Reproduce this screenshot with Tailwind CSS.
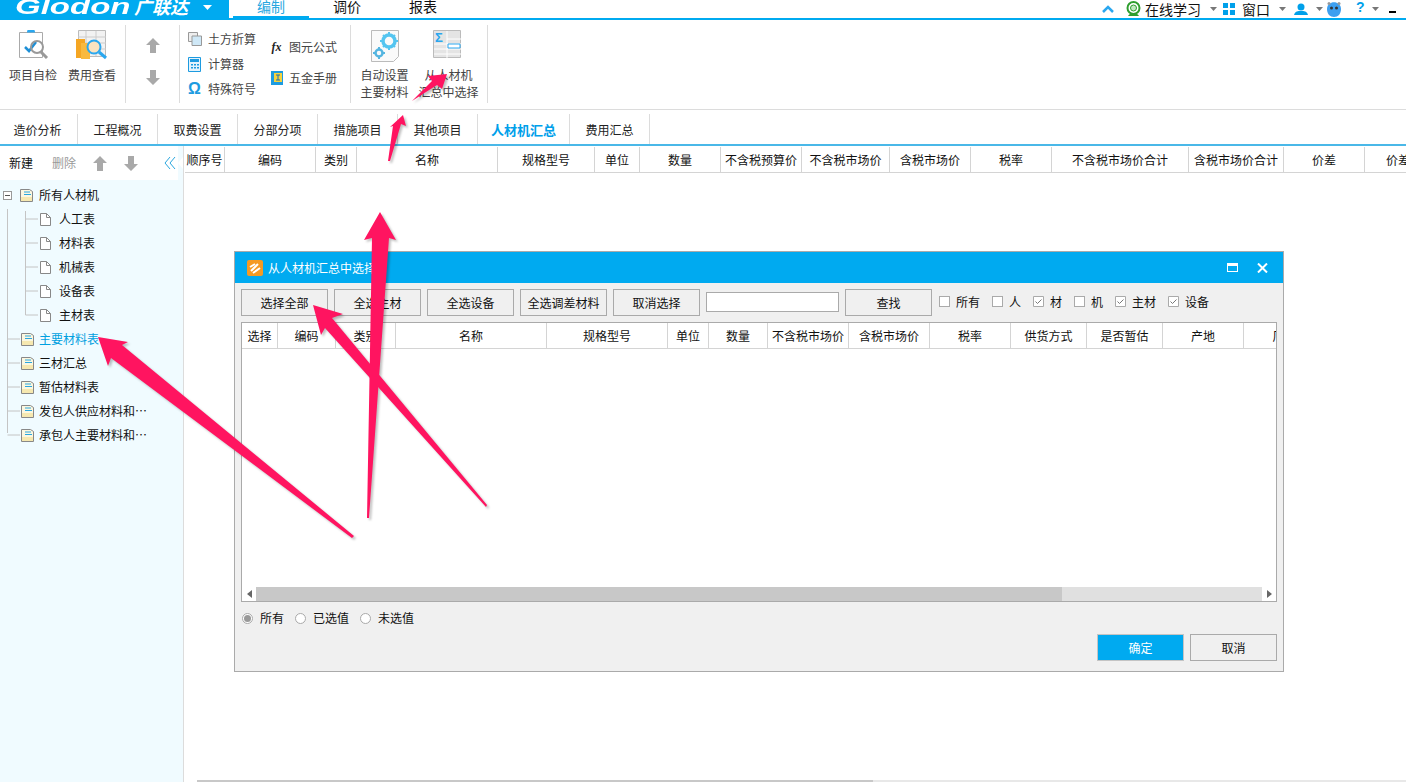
<!DOCTYPE html>
<html lang="zh-CN">
<head>
<meta charset="UTF-8">
<title>广联达 - 人材机汇总</title>
<script src="https://cdn.jsdelivr.net/npm/@tailwindcss/browser@4"></script>
</head>
<body class="bg-white">
<div class="relative w-[1406px] h-[783px] overflow-hidden bg-white text-[12px] leading-none text-[#222] font-['Noto_Sans_CJK_SC','Liberation_Sans',sans-serif]">

  <!-- Title bar -->
  <header class="flex h-[20px] border-b-2 border-[#00aaf0] overflow-hidden">
    <div class="relative flex w-[229px] h-[18px] bg-[#00aaf0] text-white overflow-hidden shrink-0 items-start pl-[15px]">
      <span class="block w-[119px] shrink-0 origin-left scale-x-[1.5] font-['Liberation_Sans'] italic font-bold text-[22px] leading-[24px] -mt-[5px]">Glodon</span>
      <span class="italic font-bold text-[18px] leading-[18px] -mt-[3px] shrink-0">广联达</span>
      <svg class="ml-[15px] mt-[5px]" width="9" height="5"><path d="M0 0h9L4.500 5z" fill="#fff"/></svg>
    </div>
    <nav class="flex ml-[4px] text-[14px] leading-[12px]">
      <div class="w-[76px] h-[18px] text-center text-[#2aa7df] border-b-2 border-[#00aaf0]">编制</div>
      <div class="w-[76px] text-center text-[#111]">调价</div>
      <div class="w-[76px] text-center text-[#111]">报表</div>
    </nav>
    <div class="ml-auto flex items-center h-[18px] text-[14px] text-[#111] pr-[10px]">
      <svg width="12" height="8" viewBox="0 0 12 8"><path d="M1 7l5-5 5 5" fill="none" stroke="#2aa7ef" stroke-width="2.500"/></svg>
      <svg class="ml-[11px]" width="17" height="17" viewBox="0 0 17 17"><circle cx="8.500" cy="7" r="6" fill="none" stroke="#2f9e2f" stroke-width="2"/><circle cx="8.500" cy="7" r="3" fill="#bfe8bf" stroke="#2f9e2f"/><path d="M3 15c2-4 9-4 11 0z" fill="#2f9e2f"/></svg>
      <span class="ml-[3px]">在线学习</span>
      <svg class="ml-[9px]" width="7" height="4"><path d="M0 0h7L3.500 4z" fill="#777"/></svg>
      <svg class="ml-[6px]" width="12" height="12"><path d="M0 0h5v5H0zM7 0h5v5H7zM0 7h5v5H0zM7 7h5v5H7z" fill="#00a0ea"/></svg>
      <span class="ml-[7px]">窗口</span>
      <svg class="ml-[9px]" width="7" height="4"><path d="M0 0h7L3.500 4z" fill="#777"/></svg>
      <svg class="ml-[8px]" width="14" height="13" viewBox="0 0 14 13"><circle cx="7" cy="4" r="3.500" fill="#00a0ea"/><path d="M0 12c1-4 4-4 7-4s6 0 7 4z" fill="#00a0ea"/></svg>
      <svg class="ml-[8px]" width="7" height="4"><path d="M0 0h7L3.500 4z" fill="#777"/></svg>
      <svg class="ml-[3px]" width="16" height="15" viewBox="0 0 16 15"><path d="M1 7c0-9 14-9 14 0 0 5-3 8-7 8S1 12 1 7z" fill="#3d9ff0"/><circle cx="5.500" cy="6" r="1.500" fill="#333"/><circle cx="10.500" cy="6" r="1.500" fill="#333"/><circle cx="3" cy="1.500" r="1.500" fill="#999"/><circle cx="13" cy="1.500" r="1.500" fill="#999"/></svg>
      <span class="ml-[14px] w-[8px] text-[#00a0ea] font-['Liberation_Sans'] font-bold text-[14px] -translate-y-[2px]">?</span>
      <svg class="ml-[8px]" width="7" height="4"><path d="M0 0h7L3.500 4z" fill="#777"/></svg>
      <div class="ml-[10px] w-[7px] h-[2px] bg-black mt-[6px]"></div>
    </div>
  </header>

  <!-- Ribbon -->
  <section class="flex h-[90px] border-b border-[#dcdcdc] text-[#444]">
    <div class="flex w-[126px] mt-[5px] h-[78px] border-r border-[#dcdcdc]">
      <div class="w-[65px] pl-[1px] flex flex-col items-center">
        <svg class="mt-[5px]" width="32" height="30" viewBox="0 0 32 30">
          <path d="M2.500 2.500h23v25h-23z" fill="#fff" stroke="#aaa"/>
          <path d="M10 2.500a4 4 0 0 1 8 0z" fill="#2aa7ef"/>
          <path d="M8 17l4 4 7-9" fill="none" stroke="#1e8fd6" stroke-width="2.500"/>
          <circle cx="20" cy="17" r="6" fill="none" stroke="#999" stroke-width="2"/>
          <path d="M24 22l6 6" stroke="#999" stroke-width="3"/>
        </svg>
        <span class="mt-[9px]">项目自检</span>
      </div>
      <div class="w-[54px] flex flex-col items-center">
        <svg class="mt-[5px]" width="32" height="30" viewBox="0 0 32 30">
          <path d="M2.500 .500h27v26h-27z" fill="#f2f2f2" stroke="#bbb"/>
          <path d="M2 7h28M2 13h28M2 19h28M10 1v25M20 1v25" stroke="#ccc"/>
          <path d="M0 9h9v19H0z" fill="#f5a623"/>
          <path d="M5 13h9v16H5z" fill="#f9b93e"/>
          <circle cx="18" cy="17" r="6.500" fill="#fbe3c0" stroke="#2aa7ef" stroke-width="2"/>
          <path d="M23 22l7 6" stroke="#2aa7ef" stroke-width="3"/>
        </svg>
        <span class="mt-[9px]">费用查看</span>
      </div>
    </div>
    <div class="flex flex-col items-center w-[54px] mt-[5px] h-[78px] border-r border-[#dcdcdc] pt-[13px] gap-[17px]">
      <svg width="14" height="15" viewBox="0 0 14 15"><path d="M7 0l7 7H10v8H4V7H0z" fill="#a9a9a9"/></svg>
      <svg width="14" height="15" viewBox="0 0 14 15"><path d="M7 15L0 8h4V0h6v8h4z" fill="#a9a9a9"/></svg>
    </div>
    <div class="flex w-[171px] mt-[5px] h-[78px] border-r border-[#dcdcdc]">
      <div class="w-[91px] pl-[8px] flex flex-col pt-[7px] gap-[11px]">
        <div class="flex items-center h-[14px]">
          <svg width="14" height="14" viewBox="0 0 14 14"><path d="M.500.500h9v9h-9z" fill="#eee" stroke="#999"/><path d="M4 4h9.500v9.500H4z" fill="#cfe8f7" stroke="#999"/></svg>
          <span class="ml-[6px]">土方折算</span>
        </div>
        <div class="flex items-center h-[14px]">
          <svg width="13" height="15" viewBox="0 0 13 15"><path d="M.500.500h12v14H.500z" fill="#e4f3fc" stroke="#1d9be0"/><path d="M2 2h9v3H2z" fill="#1d9be0"/><path d="M3 7h2v1.500H3zM6 7h2v1.500H6zM9 7h2v1.500H9zM3 10h2v1.500H3zM6 10h2v1.500H6zM9 10h2v1.500H9z" fill="#1d9be0"/></svg>
          <span class="ml-[7px]">计算器</span>
        </div>
        <div class="flex items-center h-[14px]">
          <span class="w-[14px] text-[#1d9be0] font-['Liberation_Sans'] font-bold text-[16px]">Ω</span>
          <span class="ml-[6px]">特殊符号</span>
        </div>
      </div>
      <div class="flex flex-col pt-[15px] gap-[17px]">
        <div class="flex items-center h-[14px]">
          <span class="w-[11px] text-center font-['Liberation_Serif'] italic font-bold text-[12px] text-[#222]">fx</span>
          <span class="ml-[7px]">图元公式</span>
        </div>
        <div class="flex items-center h-[14px]">
          <svg width="12" height="14" viewBox="0 0 12 14"><path d="M0 0h12v14H0z" fill="#1d9be0"/><path d="M3 2h8v9H3z" fill="#f5d33e"/><path d="M5 4h4M7 4v5M5 9h4" stroke="#1d6fb0"/></svg>
          <span class="ml-[6px]">五金手册</span>
        </div>
      </div>
    </div>
    <div class="flex w-[137px] mt-[5px] h-[78px] border-r border-[#dcdcdc] pl-[1px]">
      <div class="w-[65px] flex flex-col items-center">
        <svg class="mt-[5px]" width="28" height="32" viewBox="0 0 28 32">
          <path d="M.500.500h27v26l-5 5H.500z" fill="#fafafa" stroke="#bbb"/>
          <circle cx="18" cy="11" r="6" fill="none" stroke="#55c5f0" stroke-width="3.500"/>
          <path d="M18 2v3M18 17v3M9 11h3M24 11h3M12 5l2 2M22 15l2 2M24 5l-2 2M14 15l-2 2" stroke="#55c5f0" stroke-width="2"/>
          <circle cx="8" cy="23" r="3.500" fill="none" stroke="#55b5e0" stroke-width="2.500"/>
          <path d="M8 17v2M8 27v2M2 23h2M12 23h2" stroke="#55b5e0" stroke-width="2"/>
        </svg>
        <span class="mt-[4px] text-center leading-[17px]">自动设置<br>主要材料</span>
      </div>
      <div class="w-[63px] flex flex-col items-center">
        <svg class="mt-[5px] -translate-x-[2px]" width="28" height="30" viewBox="0 0 28 30">
          <path d="M.500.500h27v27H.500z" fill="#e4e4e4" stroke="#bbb"/>
          <path d="M14 9h14M1 14h27M1 19h27M1 24h27M14 1v27" stroke="#fff"/>
          <path d="M15 14h12v4H15z" fill="#fff" stroke="#2aa7ef"/>
          <text x="2" y="12" font-size="13" font-weight="bold" fill="#2aa7ef" font-family="Liberation Sans">Σ</text>
        </svg>
        <span class="mt-[6px] text-center leading-[17px] whitespace-nowrap">从人材机<br>汇总中选择</span>
      </div>
    </div>
  </section>

  <!-- Tabs -->
  <nav class="flex h-[36px] border-b-2 border-[#4ab8e8] text-[#222]">
    <div class="w-[78px] mt-[4px] flex items-center justify-center border-r border-[#dcdcdc] pt-[1px] pr-[2px]">造价分析</div>
    <div class="w-[80px] mt-[4px] flex items-center justify-center border-r border-[#dcdcdc] pt-[1px]">工程概况</div>
    <div class="w-[80px] mt-[4px] flex items-center justify-center border-r border-[#dcdcdc] pt-[1px]">取费设置</div>
    <div class="w-[80px] mt-[4px] flex items-center justify-center border-r border-[#dcdcdc] pt-[1px]">分部分项</div>
    <div class="w-[80px] mt-[4px] flex items-center justify-center border-r border-[#dcdcdc] pt-[1px]">措施项目</div>
    <div class="w-[80px] mt-[4px] flex items-center justify-center border-r border-[#dcdcdc] pt-[1px]">其他项目</div>
    <div class="w-[92px] mt-[4px] flex items-center justify-center border-r border-[#dcdcdc] pt-[1px] text-[#00a0ea] text-[13px] font-bold">人材机汇总</div>
    <div class="w-[80px] mt-[4px] flex items-center justify-center border-r border-[#dcdcdc] pt-[1px]">费用汇总</div>
  </nav>

  <div class="flex h-[636px]">
    <!-- Sidebar -->
    <aside class="relative w-[184px] shrink-0 border-r border-[#dcdcdc] bg-[#f0fbff]">
      <div class="flex items-center h-[34px] w-[178px] bg-white">
        <span class="ml-[9px] text-[#111]">新建</span>
        <span class="ml-[19px] text-[#999]">删除</span>
        <svg class="ml-[17px]" width="14" height="15" viewBox="0 0 14 15"><path d="M7 0l7 7H10v8H4V7H0z" fill="#a9a9a9"/></svg>
        <svg class="ml-[17px]" width="14" height="15" viewBox="0 0 14 15"><path d="M7 15L0 8h4V0h6v8h4z" fill="#a9a9a9"/></svg>
        <svg class="ml-[26px]" width="12" height="14" viewBox="0 0 12 14"><path d="M6 1L1 7l5 6M11 1L6 7l5 6" fill="none" stroke="#2aa7df"/></svg>
      </div>
      <svg class="absolute left-[178px] top-[11px]" width="5" height="12"><path d="M5 0L0 6l5 6z" fill="#fff"/></svg>
      <svg class="absolute left-0 top-[35px]" width="60" height="280" fill="none" stroke="#c4c4c4">
        <path d="M7.500 28V252M25.500 30V134M25.500 38H38M25.500 62H38M25.500 86H38M25.500 110H38M25.500 134H38M7.500 158H20M7.500 182H20M7.500 206H20M7.500 230H20M7.500 254H20"/>
      </svg>
      <ul class="relative pt-[3px] text-[#111]">
        <li class="flex items-center h-[24px]">
          <span class="flex items-center justify-center ml-[3px] w-[9px] h-[9px] border border-[#999] bg-white"><span class="w-[5px] h-px bg-[#555]"></span></span>
          <svg class="ml-[8px]" width="13" height="13" viewBox="0 0 13 13"><path d="M.500.500h9l3 2v10H.500z" fill="#fbf7e0" stroke="#888"/><path d="M1 8h11v4H1z" fill="#f6e8b0"/><path d="M4 3h6M4 5.500h7" stroke="#2aa7df"/></svg>
          <span class="ml-[6px]">所有人材机</span>
        </li>
        <li class="flex items-center h-[24px] pl-[40px]"><svg width="11" height="13" viewBox="0 0 11 13"><path d="M.500.500h6l4 4v8H.500z" fill="#fff" stroke="#888"/><path d="M6.500.500v4h4" fill="none" stroke="#888"/></svg><span class="ml-[8px]">人工表</span></li>
        <li class="flex items-center h-[24px] pl-[40px]"><svg width="11" height="13" viewBox="0 0 11 13"><path d="M.500.500h6l4 4v8H.500z" fill="#fff" stroke="#888"/><path d="M6.500.500v4h4" fill="none" stroke="#888"/></svg><span class="ml-[8px]">材料表</span></li>
        <li class="flex items-center h-[24px] pl-[40px]"><svg width="11" height="13" viewBox="0 0 11 13"><path d="M.500.500h6l4 4v8H.500z" fill="#fff" stroke="#888"/><path d="M6.500.500v4h4" fill="none" stroke="#888"/></svg><span class="ml-[8px]">机械表</span></li>
        <li class="flex items-center h-[24px] pl-[40px]"><svg width="11" height="13" viewBox="0 0 11 13"><path d="M.500.500h6l4 4v8H.500z" fill="#fff" stroke="#888"/><path d="M6.500.500v4h4" fill="none" stroke="#888"/></svg><span class="ml-[8px]">设备表</span></li>
        <li class="flex items-center h-[24px] pl-[40px]"><svg width="11" height="13" viewBox="0 0 11 13"><path d="M.500.500h6l4 4v8H.500z" fill="#fff" stroke="#888"/><path d="M6.500.500v4h4" fill="none" stroke="#888"/></svg><span class="ml-[8px]">主材表</span></li>
        <li class="flex items-center h-[24px] pl-[21px] text-[#00a0e0]"><svg width="13" height="13" viewBox="0 0 13 13"><path d="M.500.500h9l3 2v10H.500z" fill="#fbf7e0" stroke="#888"/><path d="M1 8h11v4H1z" fill="#f6e8b0"/><path d="M4 3h6M4 5.500h7" stroke="#2aa7df"/></svg><span class="ml-[5px]">主要材料表</span></li>
        <li class="flex items-center h-[24px] pl-[21px]"><svg width="13" height="13" viewBox="0 0 13 13"><path d="M.500.500h9l3 2v10H.500z" fill="#fbf7e0" stroke="#888"/><path d="M1 8h11v4H1z" fill="#f6e8b0"/><path d="M4 3h6M4 5.500h7" stroke="#2aa7df"/></svg><span class="ml-[5px]">三材汇总</span></li>
        <li class="flex items-center h-[24px] pl-[21px]"><svg width="13" height="13" viewBox="0 0 13 13"><path d="M.500.500h9l3 2v10H.500z" fill="#fbf7e0" stroke="#888"/><path d="M1 8h11v4H1z" fill="#f6e8b0"/><path d="M4 3h6M4 5.500h7" stroke="#2aa7df"/></svg><span class="ml-[5px]">暂估材料表</span></li>
        <li class="flex items-center h-[24px] pl-[21px]"><svg width="13" height="13" viewBox="0 0 13 13"><path d="M.500.500h9l3 2v10H.500z" fill="#fbf7e0" stroke="#888"/><path d="M1 8h11v4H1z" fill="#f6e8b0"/><path d="M4 3h6M4 5.500h7" stroke="#2aa7df"/></svg><span class="ml-[5px]">发包人供应材料和⋯</span></li>
        <li class="flex items-center h-[24px] pl-[21px]"><svg width="13" height="13" viewBox="0 0 13 13"><path d="M.500.500h9l3 2v10H.500z" fill="#fbf7e0" stroke="#888"/><path d="M1 8h11v4H1z" fill="#f6e8b0"/><path d="M4 3h6M4 5.500h7" stroke="#2aa7df"/></svg><span class="ml-[5px]">承包人主要材料和⋯</span></li>
      </ul>
    </aside>

    <!-- Main grid -->
    <main class="flex-1 min-w-0 flex flex-col pl-px overflow-hidden">
      <div class="flex h-[27px] pt-px border-b border-[#d4d4d4] w-[1310px] text-[#111] shrink-0">
        <div class="w-[40px] shrink-0 flex items-center justify-center border-r border-[#d4d4d4]">顺序号</div>
        <div class="w-[91px] shrink-0 flex items-center justify-center border-r border-[#d4d4d4]">编码</div>
        <div class="w-[41px] shrink-0 flex items-center justify-center border-r border-[#d4d4d4]">类别</div>
        <div class="w-[141px] shrink-0 flex items-center justify-center border-r border-[#d4d4d4]">名称</div>
        <div class="w-[97px] shrink-0 flex items-center justify-center border-r border-[#d4d4d4]">规格型号</div>
        <div class="w-[45px] shrink-0 flex items-center justify-center border-r border-[#d4d4d4]">单位</div>
        <div class="w-[81px] shrink-0 flex items-center justify-center border-r border-[#d4d4d4]">数量</div>
        <div class="w-[81px] shrink-0 flex items-center justify-center border-r border-[#d4d4d4]">不含税预算价</div>
        <div class="w-[88px] shrink-0 flex items-center justify-center border-r border-[#d4d4d4]">不含税市场价</div>
        <div class="w-[81px] shrink-0 flex items-center justify-center border-r border-[#d4d4d4]">含税市场价</div>
        <div class="w-[81px] shrink-0 flex items-center justify-center border-r border-[#d4d4d4]">税率</div>
        <div class="w-[137px] shrink-0 flex items-center justify-center border-r border-[#d4d4d4]">不含税市场价合计</div>
        <div class="w-[95px] shrink-0 flex items-center justify-center border-r border-[#d4d4d4]">含税市场价合计</div>
        <div class="w-[81px] shrink-0 flex items-center justify-center border-r border-[#d4d4d4]">价差</div>
        <div class="w-[91px] shrink-0 flex items-center justify-center border-r border-[#d4d4d4]">价差合计</div>
      </div>
      <div class="flex mt-auto h-[2px] bg-[#e8e8e8] shrink-0">
        <div class="w-[12px] bg-white"></div>
        <div class="w-[676px] bg-[#c8c8c8]"></div>
      </div>
    </main>
  </div>

  <!-- Dialog -->
  <div class="absolute left-[234px] top-[251px] w-[1050px] h-[421px] border border-[#aaa] bg-[#f0f0f0] flex flex-col text-[#111]">
    <div class="flex items-center h-[31px] bg-[#00aaf0] text-white pl-[12px] pr-[15px] shrink-0">
      <svg width="16" height="16" viewBox="0 0 16 16"><rect width="16" height="16" rx="2" fill="#f59a23"/><path d="M4 11l7-7M3 7l5-3M6 13l7-5" stroke="#fff" stroke-width="2"/></svg>
      <span class="ml-[5px]">从人材机汇总中选择</span>
      <svg class="ml-auto" width="11" height="9"><path d="M0 0h11v9H0z" fill="#fff"/><path d="M1 3h9v5H1z" fill="#00aaf0"/></svg>
      <svg class="ml-[19px]" width="11" height="10" viewBox="0 0 11 10"><path d="M1 .500l9 9M10 .500l-9 9" stroke="#fff" stroke-width="2"/></svg>
    </div>
    <div class="flex items-center h-[27px] mt-[6px] ml-[6px] shrink-0">
      <button class="w-[87px] h-[27px] border border-[#aaa] bg-[#f0f0f0]">选择全部</button>
      <button class="w-[87px] h-[27px] ml-[6px] border border-[#aaa] bg-[#f0f0f0]">全选主材</button>
      <button class="w-[87px] h-[27px] ml-[6px] border border-[#aaa] bg-[#f0f0f0]">全选设备</button>
      <button class="w-[87px] h-[27px] ml-[6px] border border-[#aaa] bg-[#f0f0f0]">全选调差材料</button>
      <button class="w-[87px] h-[27px] ml-[6px] border border-[#aaa] bg-[#f0f0f0]">取消选择</button>
      <div class="w-[133px] h-[20px] ml-[6px] -mt-[2px] border border-[#aaa] bg-white"></div>
      <button class="w-[87px] h-[27px] ml-[6px] border border-[#aaa] bg-[#f0f0f0]">查找</button>
      <label class="flex items-center ml-[7px] -mt-[2px]"><span class="w-[11px] h-[11px] border border-[#aaa] bg-white"></span><span class="ml-[6px]">所有</span></label>
      <label class="flex items-center ml-[12px] -mt-[2px]"><span class="w-[11px] h-[11px] border border-[#aaa] bg-white"></span><span class="ml-[6px]">人</span></label>
      <label class="flex items-center ml-[12px] -mt-[2px]"><svg width="11" height="11" viewBox="0 0 11 11"><path d="M.500.500h10v10H.500z" fill="#fff" stroke="#aaa"/><path d="M2.500 5.500l2 2 4-4" fill="none" stroke="#777"/></svg><span class="ml-[6px]">材</span></label>
      <label class="flex items-center ml-[12px] -mt-[2px]"><span class="w-[11px] h-[11px] border border-[#aaa] bg-white"></span><span class="ml-[6px]">机</span></label>
      <label class="flex items-center ml-[12px] -mt-[2px]"><svg width="11" height="11" viewBox="0 0 11 11"><path d="M.500.500h10v10H.500z" fill="#fff" stroke="#aaa"/><path d="M2.500 5.500l2 2 4-4" fill="none" stroke="#777"/></svg><span class="ml-[6px]">主材</span></label>
      <label class="flex items-center ml-[12px] -mt-[2px]"><svg width="11" height="11" viewBox="0 0 11 11"><path d="M.500.500h10v10H.500z" fill="#fff" stroke="#aaa"/><path d="M2.500 5.500l2 2 4-4" fill="none" stroke="#777"/></svg><span class="ml-[6px]">设备</span></label>
    </div>

    <!-- Dialog table -->
    <div class="flex flex-col w-[1036px] h-[280px] ml-[6px] mt-[6px] border border-[#aaa] bg-white overflow-hidden shrink-0">
      <div class="flex h-[26px] border-b border-[#d4d4d4] shrink-0">
        <div class="w-[36px] shrink-0 flex items-center justify-center border-r border-[#d4d4d4]">选择</div>
        <div class="w-[58px] shrink-0 flex items-center justify-center border-r border-[#d4d4d4]">编码</div>
        <div class="w-[60px] shrink-0 flex items-center justify-center border-r border-[#d4d4d4]">类别</div>
        <div class="w-[151px] shrink-0 flex items-center justify-center border-r border-[#d4d4d4]">名称</div>
        <div class="w-[121px] shrink-0 flex items-center justify-center border-r border-[#d4d4d4]">规格型号</div>
        <div class="w-[41px] shrink-0 flex items-center justify-center border-r border-[#d4d4d4]">单位</div>
        <div class="w-[59px] shrink-0 flex items-center justify-center border-r border-[#d4d4d4]">数量</div>
        <div class="w-[81px] shrink-0 flex items-center justify-center border-r border-[#d4d4d4]">不含税市场价</div>
        <div class="w-[81px] shrink-0 flex items-center justify-center border-r border-[#d4d4d4]">含税市场价</div>
        <div class="w-[81px] shrink-0 flex items-center justify-center border-r border-[#d4d4d4]">税率</div>
        <div class="w-[76px] shrink-0 flex items-center justify-center border-r border-[#d4d4d4]">供货方式</div>
        <div class="w-[76px] shrink-0 flex items-center justify-center border-r border-[#d4d4d4]">是否暂估</div>
        <div class="w-[81px] shrink-0 flex items-center justify-center border-r border-[#d4d4d4]">产地</div>
        <div class="w-[81px] shrink-0 flex items-center justify-center">厂家</div>
      </div>
      <div class="flex-1"></div>
      <div class="flex h-[14px] bg-[#e0e0e0] shrink-0">
        <div class="flex items-center justify-center w-[14px] bg-white shrink-0"><svg width="5" height="8"><path d="M5 0v8L0 4z" fill="#666"/></svg></div>
        <div class="w-[806px] bg-[#c8c8c8]"></div>
        <div class="flex items-center justify-center w-[14px] ml-auto bg-white shrink-0"><svg width="5" height="8"><path d="M0 0v8l5-4z" fill="#666"/></svg></div>
      </div>
    </div>

    <div class="flex items-center h-[16px] mt-[8px] ml-[7px] shrink-0">
      <span class="flex items-center justify-center w-[11px] h-[11px] rounded-full border border-[#aaa] bg-white"><span class="w-[7px] h-[7px] rounded-full bg-[#999]"></span></span>
      <span class="ml-[7px]">所有</span>
      <span class="ml-[11px] w-[11px] h-[11px] rounded-full border border-[#aaa] bg-white"></span>
      <span class="ml-[7px]">已选值</span>
      <span class="ml-[11px] w-[11px] h-[11px] rounded-full border border-[#aaa] bg-white"></span>
      <span class="ml-[7px]">未选值</span>
    </div>
    <div class="flex justify-end mt-[8px] mr-[6px] gap-[6px]">
      <button class="w-[87px] h-[27px] border border-[#c4c4c4] bg-[#00aaf0] text-white">确定</button>
      <button class="w-[87px] h-[27px] border border-[#aaa] bg-[#f0f0f0]">取消</button>
    </div>
  </div>

  <!-- Annotation arrows -->
  <svg class="absolute inset-0 pointer-events-none drop-shadow-[2px_2px_1px_rgba(0,0,0,0.25)]" width="1406" height="783" fill="#ff1460">
    <polygon points="98,337 128,342 122,345 354,536 352,538 111,358 108,366"/>
    <polygon points="380,212 396,240 389,238 369,518 367,518 372,238 364,240"/>
    <polygon points="313,305 343,314 332,318 487,505 486,507 325,328 321,335"/>
    <polygon points="403,115 406,126 401,124 390,161 388,161 393,126 390,127"/>
    <polygon points="447,74 442,89 437,85 412,101 432,81 428,76"/>
  </svg>
</div>
</body>
</html>
